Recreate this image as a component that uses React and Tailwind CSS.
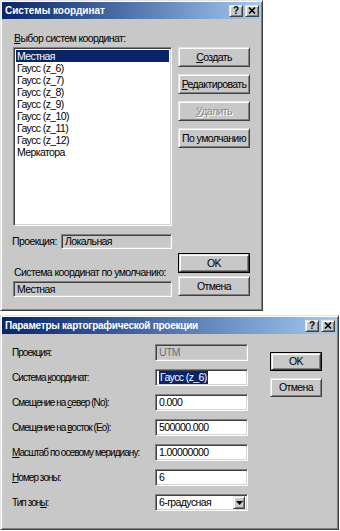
import React from 'react';

const FONT = { fontFamily: '"Liberation Sans", Arial, sans-serif' };

const RAISED =
  'border border-t-[#e4e4e4] border-l-[#e4e4e4] border-r-[#404040] border-b-[#404040] shadow-[inset_1px_1px_#ffffff,inset_-1px_-1px_#808080]';
const SUNKEN =
  'border border-t-[#808080] border-l-[#808080] border-r-white border-b-white shadow-[inset_1px_1px_#404040,inset_-1px_-1px_#d4d4d4]';
// narrow-ish dialog text, close to MS Sans Serif widths
const TXT = 'text-[10.5px] tracking-[-0.6px]';
const LBL2 = 'text-[10px] tracking-[-0.95px]';

function U({ children }) {
  return <span className="underline underline-offset-[1px]">{children}</span>;
}

function TitleBar({ title, tight = false }) {
  return (
    <div className="h-[17px] flex items-center justify-between pl-[3px] pr-[2px] bg-gradient-to-r from-[#0a246a] to-[#a6caf0]">
      <span className={`text-white font-bold text-[10px] leading-none ${tight ? 'tracking-[-0.25px]' : ''}`}>
        {title}
      </span>
      <div className="flex gap-[2px]">
        <div className={`w-[14px] h-[12px] bg-[#c8c8c8] flex items-center justify-center ${RAISED}`}>
          <span className="text-[10px] font-bold leading-none text-black">?</span>
        </div>
        <div className={`w-[14px] h-[12px] bg-[#c8c8c8] flex items-center justify-center ${RAISED}`}>
          <svg width="8" height="7" viewBox="0 0 8 7">
            <path d="M1 0.5 L7 6.5 M7 0.5 L1 6.5" stroke="#000" strokeWidth="1.6" />
          </svg>
        </div>
      </div>
    </div>
  );
}

function Button({ children, w = 'w-[72px]', h = 'h-[20px]', def = false, disabled = false }) {
  const inner = (
    <div className={`${w} ${h} bg-[#c8c8c8] flex items-center justify-center ${RAISED}`}>
      <span
        className={`${TXT} leading-none whitespace-nowrap ${
          disabled ? 'text-[#8a8a8a] [text-shadow:1px_1px_#ffffff]' : 'text-black'
        }`}
      >
        {children}
      </span>
    </div>
  );
  if (def) return <div className="border border-black">{inner}</div>;
  return inner;
}

const LIST = [
  'Местная',
  'Гаусс (z_6)',
  'Гаусс (z_7)',
  'Гаусс (z_8)',
  'Гаусс (z_9)',
  'Гаусс (z_10)',
  'Гаусс (z_11)',
  'Гаусс (z_12)',
  'Меркатора',
];

function CoordSystems() {
  return (
    <div className={`w-[263px] h-[311px] bg-[#c8c8c8] p-[1px] flex flex-col ${RAISED}`}>
      <TitleBar title="Системы координат" />
      <div className="flex pl-[11px] pt-[13px]">
        <div className="flex flex-col w-[159px]">
          <div className={`${TXT} tracking-[-0.2px] leading-[13px] h-[15px] pl-[1px] whitespace-nowrap`}>
            <U>В</U>ыбор систем координат:
          </div>
          <div className={`h-[179px] bg-white p-[2px] ${SUNKEN}`}>
            {LIST.map((t, i) => (
              <div
                key={t}
                className={`h-[12px] ${TXT} leading-[12px] pl-[1px] ${
                  i === 0 ? 'bg-[#0a246a] text-white' : 'text-black'
                }`}
              >
                {t}
              </div>
            ))}
          </div>
          <div className="flex items-center mt-[8px] h-[15px]">
            <span className={`w-[49px] ${TXT} leading-none -ml-[1px] whitespace-nowrap`}>Проекция:</span>
            <div className={`flex-1 h-[15px] flex items-center pl-[3px] ${SUNKEN}`}>
              <span className={`${TXT} leading-none`}>Локальная</span>
            </div>
          </div>
          <div className={`${TXT} leading-[13px] mt-[17px] pl-[1px] whitespace-nowrap`}>
            Система координат по умолчанию:
          </div>
          <div className={`mt-[2px] h-[16px] flex items-center pl-[3px] ${SUNKEN}`}>
            <span className={`${TXT} leading-none`}>Местная</span>
          </div>
        </div>
        <div className="flex flex-col ml-[6px] pt-[15px]">
          <div className="flex flex-col gap-[7px]">
            <Button>
              <U>С</U>оздать
            </Button>
            <Button>
              <U>Р</U>едактировать
            </Button>
            <Button disabled>
              <U>У</U>далить
            </Button>
            <Button>По умолчанию</Button>
          </div>
          <div className="flex flex-col gap-[3px] mt-[105px]">
            <Button def w="w-[70px]" h="h-[18px]">
              OK
            </Button>
            <Button>Отмена</Button>
          </div>
        </div>
      </div>
    </div>
  );
}

function Field({ children, gray = false }) {
  return (
    <div
      className={`w-[93px] h-[17px] flex items-center pl-[3px] ${gray ? 'bg-[#c8c8c8]' : 'bg-white'} ${SUNKEN}`}
    >
      {children}
    </div>
  );
}

function ProjectionParams() {
  const rows = [
    [
      'Проекция:',
      <Field gray>
        <span className={`${TXT} leading-none text-[#6e6e6e]`}>UTM</span>
      </Field>,
    ],
    [
      <>
        Система <U>к</U>оординат:
      </>,
      <Field>
        <span className={`${TXT} leading-[13px] bg-[#0a246a] text-white px-[1px]`}>Гаусс (z_6)</span>
      </Field>,
    ],
    [
      <>
        Смещение на <U>с</U>евер (No):
      </>,
      <Field>
        <span className={`${TXT} leading-none`}>0.000</span>
      </Field>,
    ],
    [
      <>
        Смещение на <U>в</U>осток (Eo):
      </>,
      <Field>
        <span className={`${TXT} leading-none`}>500000.000</span>
      </Field>,
    ],
    [
      <>
        <U>М</U>асштаб по осевому меридиану:
      </>,
      <Field>
        <span className={`${TXT} leading-none`}>1.00000000</span>
      </Field>,
    ],
    [
      <>
        <U>Н</U>омер зоны:
      </>,
      <Field>
        <span className={`${TXT} leading-none`}>6</span>
      </Field>,
    ],
    [
      <>
        Тип зон<U>ы</U>:
      </>,
      <div className={`w-[93px] h-[17px] bg-white flex items-center justify-between pl-[3px] pr-[2px] ${SUNKEN}`}>
        <span className={`${TXT} leading-none`}>6-градусная</span>
        <div className={`w-[12px] h-[13px] bg-[#c8c8c8] flex items-center justify-center ${RAISED}`}>
          <svg width="7" height="4" viewBox="0 0 7 4">
            <path d="M0 0 H7 L3.5 4 Z" fill="#000" />
          </svg>
        </div>
      </div>,
    ],
  ];
  return (
    <div className={`w-[339px] h-[215px] bg-[#c8c8c8] p-[1px] flex flex-col ${RAISED}`}>
      <TitleBar title="Параметры картографической проекции" tight />
      <div className="flex pl-[10px] pt-[10px]">
        <div className="flex flex-col gap-[8px]">
          {rows.map(([label, field], i) => (
            <div key={i} className="flex items-center h-[17px]">
              <span className={`w-[143px] ${LBL2} leading-none text-black whitespace-nowrap`}>{label}</span>
              {field}
            </div>
          ))}
        </div>
        <div className="flex flex-col gap-[7px] ml-[22px] pt-[8px]">
          <Button def w="w-[50px]" h="h-[17px]">
            OK
          </Button>
          <Button w="w-[52px]" h="h-[19px]">
            Отмена
          </Button>
        </div>
      </div>
    </div>
  );
}

export default function App() {
  return (
    <div className="w-[340px] h-[531px] bg-white flex flex-col gap-[4px] text-black" style={FONT}>
      <CoordSystems />
      <ProjectionParams />
    </div>
  );
}
